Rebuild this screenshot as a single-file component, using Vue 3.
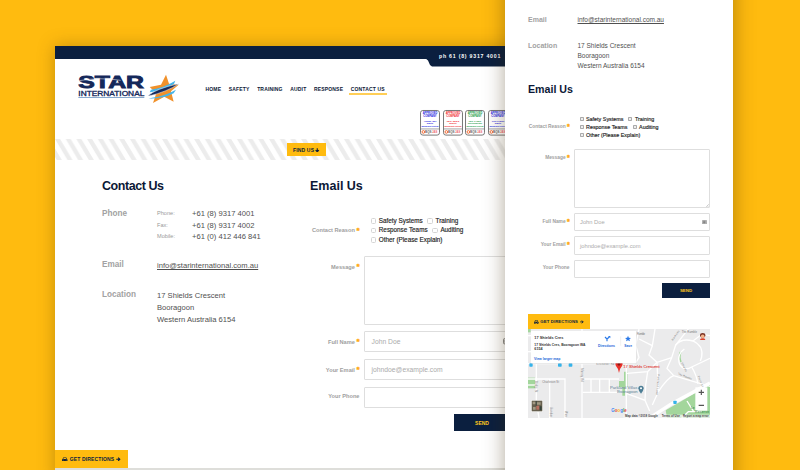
<script setup>
const nav = ['HOME', 'SAFETY', 'TRAINING', 'AUDIT', 'RESPONSE', 'CONTACT US']

const badges = [
  { color: '#1a1ae0', code: 'AS/NZS 4801', kind: 'Safety', width: 20 },
  { color: '#f01c2c', code: 'ISO 9001', kind: 'Quality', width: 22 },
  { color: '#12993f', code: 'ISO 14001', kind: 'Environmental', width: 42 },
  { color: '#1a1ae0', code: 'OHSAS 18001', kind: 'Safety', width: 20 },
]

const phones = [
  { kind: 'Phone:', number: '+61 (8) 9317 4001' },
  { kind: 'Fax:', number: '+61 (8) 9317 4002' },
  { kind: 'Mobile:', number: '+61 (0) 412 446 841' },
]

const address = ['17 Shields Crescent', 'Booragoon', 'Western Australia 6154']

const reasons = [
  ['Safety Systems', 'Training'],
  ['Response Teams', 'Auditing'],
  ['Other (Please Explain)'],
]

const fields = [
  { label: 'Full Name', hint: 'John Doe', required: true, card: true },
  { label: 'Your Email', hint: 'johndoe@example.com', required: true },
  { label: 'Your Phone', hint: '', required: false },
]

const roads = [
  'M39 176 H360', 'M39 222 H150 V339', 'M64 176 V290 L72 339', 'M104 222 V339', 'M201 72 V339',
  'M201 222 H312', 'M203 262 H318', 'M228 222 V262', 'M254 222 V262', 'M283 222 V262',
  'M334 176 V339', 'M360 176 L372 158 L362 120 L372 72', 'M372 102 L412 122 L420 72',
  'M412 122 L402 150 L426 172 L470 158 L482 120 L512 82 L520 72', 'M336 205 L398 200 L426 172',
  'M334 265 L390 286 L404 318', 'M398 200 L392 240 L390 286', 'M426 172 L430 260 L412 300',
  'M430 260 Q458 218 476 212 L585 244', 'M476 212 L456 190 L470 158',
  'M508 132 Q484 150 494 178 Q508 200 530 186 L585 160', 'M482 120 Q500 98 534 108 Q566 122 560 156 L556 168',
  'M534 108 L560 88 L585 92', 'M530 186 Q546 212 548 236', 'M39 92 H60', 'M39 140 H60', 'M39 240 H64',
]
</script>

<template>
  <div class="stage">
    <section class="window desktop">
      <div class="topbar"></div>
      <div class="tab-row"><div class="tab">ph 61 (8) 9317 4001</div></div>

      <header class="header">
        <svg class="logo" viewBox="24 18 306 90">
          <text class="logo-star" x="25" y="60" textLength="197" lengthAdjust="spacingAndGlyphs">STAR</text>
          <path d="M28 38 Q90 27 152 37" fill="none" stroke="#fff" stroke-width="1.500" />
          <text class="logo-int" x="25" y="82.500" textLength="198" lengthAdjust="spacingAndGlyphs">INTERNATIONAL</text>
          <path d="M25 88.500 H223" stroke="#4d7fb5" stroke-width="2" />
          <path d="M288 20 L297 47 L326 50 L303 70 L311 101 L283 86 L249 105 L259 76 L239 57 L273 50 Z" fill="#f0912b" />
          <path d="M243 65 Q280 60 316 38 L312 48 Q282 68 239 73 Z" fill="#45b5ea" />
          <path d="M235 83 Q255 63 327 47 Q290 72 236 84 Z" fill="#14285a" stroke="#fff" stroke-width="1.500" />
          <path d="M246 89 Q284 84 318 65 L311 76 Q282 92 236 92 Z" fill="#45b5ea" />
        </svg>
        <nav class="nav">
          <a v-for="item in nav" :key="item" :class="{ active: item === 'CONTACT US' }">{{ item }}</a>
        </nav>
      </header>

      <div class="badges">
        <svg v-for="b in badges" :key="b.code" class="badge" viewBox="0 0 60 77">
          <rect x="1.500" y="1.500" width="57" height="74" rx="7" fill="#fff" stroke="#777" stroke-width="3" />
          <g :fill="b.color" text-anchor="middle" font-weight="bold">
            <text x="30" y="13" font-size="8.500" textLength="44" lengthAdjust="spacingAndGlyphs">APPROVED</text>
            <text x="30" y="22" font-size="8.500" textLength="40" lengthAdjust="spacingAndGlyphs">COMPANY</text>
            <text x="30" y="36" font-size="7" textLength="38" lengthAdjust="spacingAndGlyphs">{{ b.code }}</text>
            <text x="30" y="43" font-size="6.500" :textLength="b.width" lengthAdjust="spacingAndGlyphs">{{ b.kind }}</text>
            <text x="30" y="51" font-size="5.300" textLength="51" lengthAdjust="spacingAndGlyphs">Management Systems</text>
          </g>
          <path d="M2 57 H58" stroke="#777" stroke-width="2" />
          <circle cx="10" cy="66" r="4" fill="none" stroke="#f26a32" stroke-width="3" />
          <text x="15" y="70" font-size="9" font-weight="bold" fill="#666">BQS</text>
          <text x="36" y="70" font-size="8.500" font-weight="bold" fill="#ee6a70">JAS</text>
        </svg>
      </div>

      <div class="stripes">
        <svg class="stripe-art" viewBox="0 0 450 21">
          <defs>
            <pattern id="slant" width="10.700" height="21" patternUnits="userSpaceOnUse">
              <path d="M-10.700 0 h5 l12.500 21 h-5 z M0 0 h5 l12.500 21 h-5 z M-21.400 0 h5 l12.500 21 h-5 z" fill="#ececec" />
            </pattern>
          </defs>
          <rect width="450" height="21" fill="url(#slant)" />
        </svg>
        <div class="find">FIND US
          <svg viewBox="0 0 10 10"><path d="M5 0.500 V8 M1.300 4.800 L5 8.500 L8.700 4.800" fill="none" stroke="#0b1f3f" stroke-width="2.400" /></svg>
        </div>
      </div>

      <div class="columns">
        <div class="contact">
          <h2 class="tight">Contact Us</h2>
          <dl class="details">
            <dt>Phone</dt>
            <dd class="phones">
              <p v-for="p in phones" :key="p.kind"><small>{{ p.kind }}</small>{{ p.number }}</p>
            </dd>
            <dt>Email</dt>
            <dd class="mail"><a>info@starinternational.com.au</a></dd>
            <dt>Location</dt>
            <dd class="place"><p v-for="line in address" :key="line">{{ line }}</p></dd>
          </dl>
        </div>

        <div class="email">
          <h2>Email Us</h2>
          <form class="form">
            <div class="row reasons">
              <label>Contact Reason<i>*</i></label>
              <div class="checks">
                <div v-for="(line, n) in reasons" :key="n" class="check-line">
                  <span v-for="r in line" :key="r"><b></b>{{ r }}</span>
                </div>
              </div>
            </div>
            <div class="row"><label class="first">Message<i>*</i></label><div class="area"></div></div>
            <div v-for="f in fields" :key="f.label" class="row">
              <label :class="{ plain: !f.required }">{{ f.label }}<i v-if="f.required">*</i></label>
              <div class="input">{{ f.hint }}
                <svg v-if="f.card" viewBox="0 0 10 9"><rect x="0.700" y="0.700" width="8.600" height="7.600" rx="1.500" fill="#ddd" stroke="#888" stroke-width="1.400" /><path d="M3 2.500 H5.500 V6.500 H3 Z M7 2 V7" fill="#777" stroke="#777" /></svg>
              </div>
            </div>
            <div class="send">SEND</div>
          </form>
        </div>
      </div>

      <div class="directions">
        <svg class="car" viewBox="0 0 14 12"><path d="M3 1 H11 L12.500 5 L14 6.500 V10 H12.500 V12 H10 V10 H4 V12 H1.500 V10 H0 V6.500 L1.500 5 Z M4.200 2.500 L3.200 5 H10.800 L9.800 2.500 Z M2 6.800 V8.400 H4.300 V6.800 Z M9.700 6.800 V8.400 H12 V6.800 Z" fill="#0b1f3f" fill-rule="evenodd" /></svg>
        GET DIRECTIONS
        <svg class="arrow" viewBox="0 0 10 10"><path d="M0.500 5 H8 M4.800 1.300 L8.500 5 L4.800 8.700" fill="none" stroke="#0b1f3f" stroke-width="2.400" /></svg>
      </div>
      <div class="map-edge"></div>
    </section>

    <section class="window mobile">
      <dl class="details">
        <dt>Email</dt>
        <dd class="mail"><a>info@starinternational.com.au</a></dd>
        <dt>Location</dt>
        <dd class="place"><p v-for="line in address" :key="line">{{ line }}</p></dd>
      </dl>
      <h2>Email Us</h2>
      <form class="form">
        <div class="row reasons">
          <label>Contact Reason<i>*</i></label>
          <div class="checks">
            <div v-for="(line, n) in reasons" :key="n" class="check-line">
              <span v-for="r in line" :key="r"><b></b>{{ r }}</span>
            </div>
          </div>
        </div>
        <div class="row"><label class="first">Message<i>*</i></label>
          <div class="area"><svg viewBox="0 0 6 6"><path d="M0.500 5.500 L5.500 0.500 M3.500 5.500 L5.500 3.500" stroke="#999" /></svg></div>
        </div>
        <div v-for="f in fields" :key="f.label" class="row">
          <label :class="{ plain: !f.required }">{{ f.label }}<i v-if="f.required">*</i></label>
          <div class="input">{{ f.hint }}
            <svg v-if="f.card" viewBox="0 0 10 9"><rect x="0.700" y="0.700" width="8.600" height="7.600" rx="1.500" fill="#ddd" stroke="#888" stroke-width="1.400" /><path d="M3 2.500 H5.500 V6.500 H3 Z M7 2 V7" fill="#777" stroke="#777" /></svg>
          </div>
        </div>
        <div class="send">SEND</div>
      </form>
      <div class="directions">
        <svg class="car" viewBox="0 0 14 12"><path d="M3 1 H11 L12.500 5 L14 6.500 V10 H12.500 V12 H10 V10 H4 V12 H1.500 V10 H0 V6.500 L1.500 5 Z M4.200 2.500 L3.200 5 H10.800 L9.800 2.500 Z M2 6.800 V8.400 H4.300 V6.800 Z M9.700 6.800 V8.400 H12 V6.800 Z" fill="#0b1f3f" fill-rule="evenodd" /></svg>
        GET DIRECTIONS
        <svg class="arrow" viewBox="0 0 10 10"><path d="M0.500 5 H8 M4.800 1.300 L8.500 5 L4.800 8.700" fill="none" stroke="#0b1f3f" stroke-width="2.400" /></svg>
      </div>
      <svg class="map" viewBox="39 72 546 267" preserveAspectRatio="none">
        <rect x="39" y="72" width="546" height="267" fill="#ebebec" />
        <g fill="#a3d69c">
          <path d="M327 200 H337 V246 H330 V272 H322 V246 H312 V228 H327 Z" />
          <path d="M39 218 H60 V250 H39 Z" />
          <path d="M452 316 L545 262 L585 240 V339 H456 Z" />
          <path d="M39 72 H47 V82 H39 Z" />
          <path d="M494 140 Q488 152 496 172 L500 170 Q494 154 500 142 Z" />
        </g>
        <path v-for="d in roads" :key="d" :d="d" fill="none" stroke="#fff" stroke-width="4" />
        <path d="M404 339 L470 296 L585 234" fill="none" stroke="#fff" stroke-width="10" />
        <path d="M516 288 L536 320 M500 339 L520 320 H560" fill="none" stroke="#fff" stroke-width="4" />
        <g class="road-names">
          <text x="244" y="181" textLength="54">Kitchener Rd</text>
          <text x="82" y="235" textLength="50">Charleson St</text>
          <text x="366" y="91" textLength="24">Rumble</text>
          <text x="500" y="84" textLength="46">The Ramble</text>
          <text transform="translate(488 208) rotate(22)" textLength="44">The Ramble</text>
          <text transform="translate(199 190) rotate(90)" textLength="40">Murray Rd</text>
          <text transform="translate(61 228) rotate(90)" textLength="34">Birdip St</text>
          <text transform="translate(104 306) rotate(90)" textLength="30">Gunbar</text>
          <text transform="translate(150 318) rotate(90)" textLength="18">Wier</text>
          <text transform="translate(428 208) rotate(94)" textLength="62">Parkland Loop</text>
          <text transform="translate(474 108) rotate(-58)" textLength="36">Ramsay</text>
          <text transform="translate(548 214) rotate(68)" textLength="34">Point St</text>
          <text transform="translate(498 174) rotate(62)" textLength="30">Shields</text>
        </g>
        <g fill="#35b3ea">
          <rect x="43" y="175" width="10" height="10" rx="2" /><rect x="129" y="175" width="11" height="10" rx="2" />
          <rect x="161" y="175" width="11" height="10" rx="2" /><rect x="475" y="287" width="10" height="10" rx="2" />
        </g>
        <text x="285" y="253" class="park" textLength="82" lengthAdjust="spacingAndGlyphs">Parkland Villas</text>
        <text x="306" y="265" class="park" textLength="62" lengthAdjust="spacingAndGlyphs">Booragoon</text>
        <path d="M378 266 Q370 256 370 250 A8 8 0 0 1 386 250 Q386 256 378 266 Z" fill="#4d7e95" />
        <circle cx="378" cy="250" r="3" fill="#fff" />
        <path d="M312 204 Q310 190 303 183 A10.500 10.500 0 1 1 321 183 Q314 190 312 204 Z" fill="#ea3029" />
        <circle cx="312" cy="178" r="4" fill="#8b1510" />
        <text x="325" y="190" class="pin-name" textLength="109" lengthAdjust="spacingAndGlyphs">17 Shields Crescent</text>

        <rect x="48" y="80" width="316" height="96" fill="#c9c9c9" opacity="0.600" />
        <rect x="48" y="78" width="315" height="96" fill="#fff" />
        <g class="card">
          <text x="58" y="102" font-size="11.500" textLength="87" lengthAdjust="spacingAndGlyphs">17 Shields Cres</text>
          <text x="58" y="122" textLength="153" lengthAdjust="spacingAndGlyphs">17 Shields Cres, Booragoon WA</text>
          <text x="58" y="136" textLength="25" lengthAdjust="spacingAndGlyphs">6154</text>
          <g fill="#1a66d8">
            <text x="57" y="164" textLength="79" lengthAdjust="spacingAndGlyphs">View larger map</text>
            <text x="249" y="126" textLength="51" lengthAdjust="spacingAndGlyphs">Directions</text>
            <text x="328" y="126" textLength="23" lengthAdjust="spacingAndGlyphs">Save</text>
          </g>
        </g>
        <path d="M317 94 V122" stroke="#e2e2e2" stroke-width="1.500" />
        <path d="M276 109 V102 L270 96 M276 102 L283 96" fill="none" stroke="#2c7ae8" stroke-width="3.500" />
        <path d="M279 93 h7 v7 z" fill="#2c7ae8" />
        <path d="M339 92 L341.500 98.500 L348 99 L343 103 L345 109 L339 105.500 L333 109 L335 103 L330 99 L336.500 98.500 Z" fill="#2c7ae8" />

        <ellipse cx="563" cy="91" rx="8" ry="7" fill="#7a3325" />
        <circle cx="563" cy="94" r="5.500" fill="#f3b38b" />
        <path d="M555 105 Q555 99 563 100 Q571 99 571 105 Z" fill="#d9452f" />

        <rect x="48" y="285" width="36" height="36" fill="#fff" />
        <rect x="50" y="287" width="32" height="32" fill="#67604f" />
        <path d="M53 290 h9 v8 h-9 z M65 292 h12 v7 h-12 z M54 306 h8 v8 h-8 z" fill="#a39a84" />
        <path d="M64 302 h9 v12 h-9 z" fill="#b87060" /><path d="M74 304 h6 v12 h-6 z M62 288 h3 v14 h-3 z" fill="#36433b" />

        <rect x="541" y="247" width="36" height="70" fill="#fff" />
        <path d="M551 262 H567 M559 254 V270 M551 301 H567" stroke="#555" stroke-width="3.500" />
        <text x="528" y="312" class="green" textLength="11">Le</text>
        <text x="540" y="325" class="green" textLength="42">Reserve</text>
        <text x="289" y="321" class="google" textLength="46" lengthAdjust="spacingAndGlyphs"><tspan fill="#4285f4">G</tspan><tspan fill="#ea4335">o</tspan><tspan fill="#fbbc05">o</tspan><tspan fill="#4285f4">g</tspan><tspan fill="#34a853">l</tspan><tspan fill="#ea4335">e</tspan></text>
        <rect x="325" y="329" width="260" height="10" fill="#f4f4f4" opacity="0.750" />
        <g class="credits">
          <text x="330" y="336.500" textLength="99" lengthAdjust="spacingAndGlyphs">Map data ©2018 Google</text>
          <text x="440" y="336.500" textLength="55" lengthAdjust="spacingAndGlyphs">Terms of Use</text>
          <text x="504" y="336.500" textLength="77" lengthAdjust="spacingAndGlyphs">Report a map error</text>
        </g>
      </svg>
    </section>
  </div>
</template>

<style>
body { margin: 0; overflow: hidden; }
</style>

<style scoped>
.stage {
  position: relative; width: 800px; height: 470px; overflow: hidden;
  background: #ffbb0f; font-family: "Liberation Sans", Arial, sans-serif; color: #444;
}
.window { position: absolute; background: #fff; box-sizing: border-box; }
.desktop { left: 55px; top: 46px; width: 470px; height: 434px; box-shadow: 0 0 16px rgba(90, 60, 0, 0.35); }
.mobile { left: 505px; top: -20px; width: 228px; height: 510px; padding: 33.500px 23px 0; box-shadow: 0 0 20px rgba(60, 40, 0, 0.4); }
h2, dl, dd, p { margin: 0; }
h2 { color: #0b1836; font-weight: bold; white-space: nowrap; }
svg text { font-family: "Liberation Sans", Arial, sans-serif; }

.topbar { height: 12.500px; background: #0b1f3f; }
.tab-row { height: 7.500px; display: flex; }
.tab {
  margin-left: 370px; width: 100px; margin-top: -5px; height: 13px; padding-left: 14px; box-sizing: border-box;
  background: #0b1f3f; color: #fff; font-size: 5.200px; font-weight: bold; letter-spacing: 0.780px; line-height: 5px;
  white-space: nowrap; clip-path: polygon(0 0, 100% 0, 100% 100%, 7px 100%, 5px 11.500px, 3px 7px, 0 4.500px);
}
.header { display: flex; height: 42px; }
.logo { width: 102px; height: 30px; margin: 8px 0 0 23px; flex: none; }
.logo-star { font-size: 49px; font-weight: bold; fill: #14285a; stroke: #14285a; stroke-width: 2.500; }
.logo-int { font-size: 19px; fill: #14285a; stroke: #14285a; stroke-width: 0.900; }
.nav { display: flex; margin: 17px 0 0 25.500px; gap: 7.600px; font-size: 5px; font-weight: bold; letter-spacing: 0.170px; color: #0b1836; white-space: nowrap; }
.nav a { height: 12px; line-height: 12px; box-sizing: border-box; }
.nav .active { border-bottom: 2px solid #ffce56; padding: 0 2px; margin-left: -2px; }
.badges { display: flex; gap: 2.500px; margin: 2px 0 0 365px; }
.badge { width: 20px; height: 25.600px; flex: none; overflow: visible; }
.stripes { display: flex; margin-top: 3.900px; height: 21px; align-items: center; }
.stripe-art { width: 450px; height: 21px; flex: none; }
.find {
  width: 39px; height: 13px; margin-left: -218px; position: relative; flex: none; background: #ffbb0f; color: #0b1f3f;
  display: flex; align-items: center; justify-content: center; gap: 1.300px; font-size: 5px; font-weight: bold; letter-spacing: 0.150px;
}
.find svg { width: 4.500px; height: 4.500px; }

.columns { display: flex; padding: 17.500px 0 0 47px; height: 272px; }
.contact { width: 208px; flex: none; }
.columns h2 { font-size: 12.500px; line-height: 16px; }
.columns .tight { letter-spacing: -0.450px; }
.details { display: grid; color: #505050; }
.details dt { font-weight: bold; color: #a2a2a2; }
.details p { white-space: nowrap; }
.mail a { text-decoration: underline; text-underline-offset: 1px; }
.desktop .details { grid-template-columns: 55px auto; margin-top: 14px; font-size: 7.620px; line-height: 11.700px; }
.desktop .details dt { font-size: 8.200px; padding-top: 0.500px; }
.desktop .details p { display: flex; }
.details small { width: 35px; font-size: 5.600px; color: #999; }
.desktop .mail { margin: 17px 0 18.300px; }
.desktop dt:nth-of-type(2) { margin-top: 15.500px; }
.desktop dt:nth-of-type(3) { margin-top: -1.500px; }

.email { width: 260px; flex: none; }
.row { display: flex; }
.row label { flex: none; display: flex; justify-content: flex-end; font-weight: bold; color: #a0a0a0; white-space: nowrap; box-sizing: border-box; }
.row i { color: #ffa80f; font-style: normal; -webkit-text-stroke: 0.400px #ffa80f; }
.check-line { display: flex; color: #222; -webkit-text-stroke: 0.150px #222; white-space: nowrap; }
.check-line span { display: flex; align-items: center; }
.check-line b { box-sizing: border-box; flex: none; border: 0.800px solid #d4d4d4; border-radius: 1.500px; background: #fff; }
.area, .input { box-sizing: border-box; border: 1px solid #dedede; border-radius: 1px; background: #fff; }
.area { display: flex; align-items: flex-end; justify-content: flex-end; }
.area svg { width: 3px; height: 3px; }
.input { color: #ababab; display: flex; align-items: center; justify-content: space-between; }
.send { background: #0b1f3f; color: #ffc81e; font-weight: bold; display: flex; align-items: center; justify-content: center; }

.desktop .form { margin-top: 22px; }
.desktop .row label { width: 49.500px; margin-right: 4.500px; font-size: 5.650px; line-height: 22px; }
.desktop .row i { font-size: 8px; margin-left: 1.600px; width: 3px; }
.desktop .row { margin-bottom: 6px; }
.desktop .reasons { margin-bottom: 11px; }
.desktop .reasons label { line-height: 29px; }
.desktop .plain { line-height: 18px !important; }
.desktop .checks { padding-left: 6.500px; font-size: 6.330px; line-height: 9.500px; }
.desktop .check-line { gap: 4.500px; }
.desktop .check-line b { width: 5.500px; height: 5.500px; margin-right: 2.800px; margin-top: 1px; }
.desktop .area { width: 160px; height: 68.700px; }
.desktop .input { width: 160px; height: 21.700px; padding: 0 13px 0 6.500px; font-size: 6.750px; }
.desktop .input svg { width: 7px; height: 6.500px; }
.desktop .send { margin-left: 144px; width: 56px; height: 17px; font-size: 5px; }

.directions { background: #ffbb0f; color: #0b1f3f; font-weight: bold; display: flex; align-items: center; justify-content: center; white-space: nowrap; }
.desktop .directions { margin-top: 0; width: 73px; height: 18px; font-size: 5px; letter-spacing: 0.130px; gap: 1.900px; }
.desktop .car { width: 5.500px; height: 4.700px; }
.desktop .arrow { width: 4.500px; height: 4.500px; }
.map-edge { height: 6px; background: #dededa; }

.mobile .details { grid-template-columns: 49.500px auto; font-size: 6.500px; line-height: 10px; }
.mobile .details dt { font-size: 7px; line-height: 12px; }
.mobile .mail { padding-top: 1.500px; margin-bottom: 15.700px; }
.mobile dt:nth-of-type(2) { margin-top: -1px; }
.mobile h2 { font-size: 10.650px; line-height: 14px; margin-top: 11.500px; }
.mobile .form { margin-top: 18.500px; }
.mobile .row { margin-bottom: 5px; }
.mobile .row label { width: 41.500px; margin-right: 4px; font-size: 4.850px; line-height: 18.500px; }
.mobile .row i { font-size: 7px; margin-left: 1.300px; width: 2.600px; }
.mobile .reasons { margin-bottom: 10.500px; }
.mobile .reasons label { line-height: 24px; }
.mobile .plain { line-height: 15px !important; }
.mobile .checks { padding-left: 6px; font-size: 5.400px; line-height: 8px; }
.mobile .check-line { gap: 5px; }
.mobile .check-line b { width: 4px; height: 4px; margin-right: 2.500px; border-color: #aaa; background: #eee; border-radius: 0.800px; }
.mobile .area { width: 137px; height: 58.700px; }
.mobile .input { width: 137px; height: 18.500px; padding: 0 2.500px 0 5.500px; font-size: 5.750px; }
.mobile .input svg { width: 5px; height: 4.500px; }
.mobile .send { margin-left: 134px; width: 48px; height: 14.500px; font-size: 4.400px; }
.mobile .directions { margin-top: 16.500px; width: 61.500px; height: 15px; font-size: 4.250px; letter-spacing: 0.110px; gap: 1.700px; }
.mobile .car { width: 4.700px; height: 4px; }
.mobile .arrow { width: 3.800px; height: 3.800px; }
.map { display: block; width: 182px; height: 89px; }
.road-names { font-size: 8px; fill: #777; }
.park { font-size: 12px; fill: #5c8294; }
.pin-name { font-size: 12px; fill: #e2443c; stroke: #e2443c; stroke-width: 0.300; }
.card { font-size: 10px; font-weight: bold; fill: #333; }
.green { font-size: 10px; fill: #25783a; }
.google { font-size: 18px; font-weight: bold; }
.credits { font-size: 8px; font-weight: bold; fill: #444; }
</style>
